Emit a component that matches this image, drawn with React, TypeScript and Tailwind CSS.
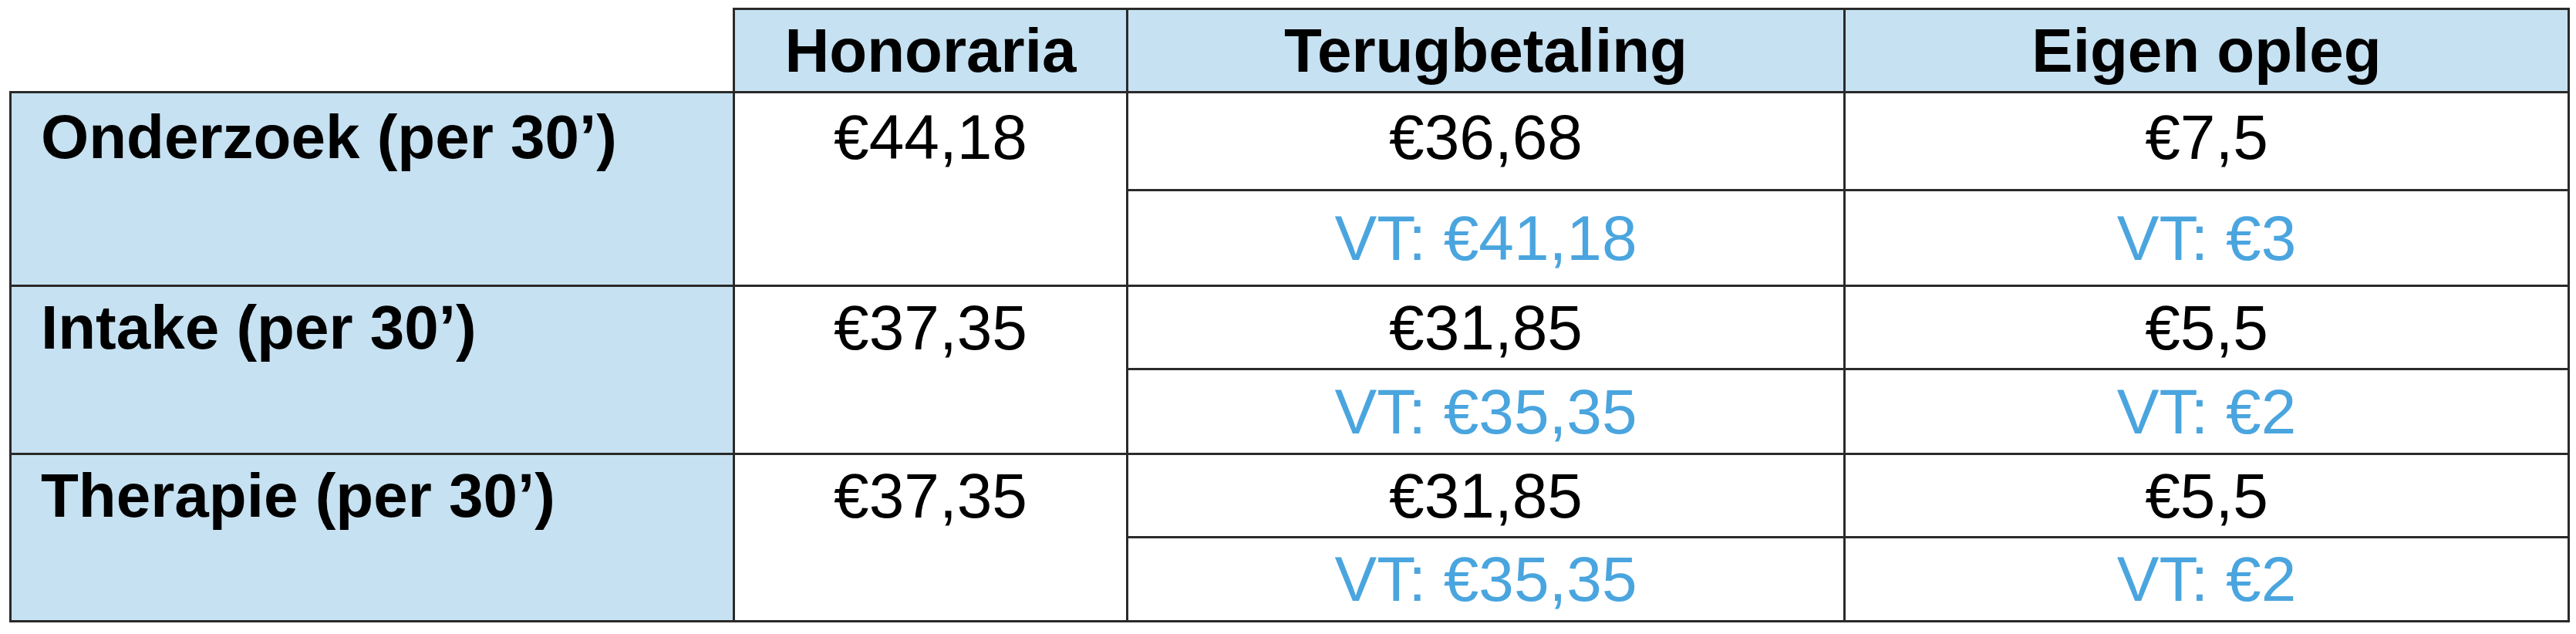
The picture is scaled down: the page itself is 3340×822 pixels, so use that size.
import React from "react";

type Row = {
  label: string;
  hon: string;
  terug: string;
  eigen: string;
  vtT: string;
  vtE: string;
  h1: string;
  h2: string;
  inner: string;
};

const rows: Row[] = [
  {
    label: "Onderzoek (per 30’)",
    hon: "€44,18",
    terug: "€36,68",
    eigen: "€7,5",
    vtT: "VT: €41,18",
    vtE: "VT: €3",
    h1: "h-[127px]",
    h2: "h-[124px]",
    inner: "h-[124px] pb-[10px]",
  },
  {
    label: "Intake (per 30’)",
    hon: "€37,35",
    terug: "€31,85",
    eigen: "€5,5",
    vtT: "VT: €35,35",
    vtE: "VT: €2",
    h1: "h-[108px]",
    h2: "h-[110px]",
    inner: "h-[105px]",
  },
  {
    label: "Therapie (per 30’)",
    hon: "€37,35",
    terug: "€31,85",
    eigen: "€5,5",
    vtT: "VT: €35,35",
    vtE: "VT: €2",
    h1: "h-[108px]",
    h2: "h-[109px]",
    inner: "h-[105px]",
  },
];

const cell = "border-[3px] border-[#2a2a2a] p-0 leading-none";

export default function App() {
  return (
    <div className="min-h-screen bg-white pt-[10px] pl-[12px] font-['Liberation_Sans',Arial,sans-serif] text-black">
      <table className="table-fixed border-collapse w-[3317px]">
        <colgroup>
          <col className="w-[938px]" />
          <col className="w-[510px]" />
          <col className="w-[930px]" />
          <col className="w-[939px]" />
        </colgroup>
        <thead>
          <tr className="h-[108px]">
            <th className="border-0 border-r-[3px] border-b-[3px] border-[#2a2a2a] bg-white p-0"></th>
            <th className={`${cell} bg-[#c6e1f1] text-[80px] font-bold text-center align-middle`}>
              Honoraria
            </th>
            <th className={`${cell} bg-[#c6e1f1] text-[80px] font-bold text-center align-middle`}>
              Terugbetaling
            </th>
            <th className={`${cell} bg-[#c6e1f1] text-[80px] font-bold text-center align-middle`}>
              Eigen opleg
            </th>
          </tr>
        </thead>
        <tbody>
          {rows.map((r) => (
            <React.Fragment key={r.label}>
              <tr className={r.h1}>
                <td rowSpan={2} className={`${cell} bg-[#c6e1f1] align-top`}>
                  <div className={`${r.inner} flex items-center pl-[38px] text-[80px] font-bold`}>
                    {r.label}
                  </div>
                </td>
                <td rowSpan={2} className={`${cell} bg-white align-top`}>
                  <div className={`${r.inner} flex items-center justify-center text-[82px]`}>
                    {r.hon}
                  </div>
                </td>
                <td className={`${cell} bg-white align-top`}>
                  <div className={`${r.inner} flex items-center justify-center text-[82px]`}>
                    {r.terug}
                  </div>
                </td>
                <td className={`${cell} bg-white align-top`}>
                  <div className={`${r.inner} flex items-center justify-center text-[82px]`}>
                    {r.eigen}
                  </div>
                </td>
              </tr>
              <tr className={r.h2}>
                <td className={`${cell} bg-white text-center align-middle text-[82px] text-[#4aa5df]`}>
                  {r.vtT}
                </td>
                <td className={`${cell} bg-white text-center align-middle text-[82px] text-[#4aa5df]`}>
                  {r.vtE}
                </td>
              </tr>
            </React.Fragment>
          ))}
        </tbody>
      </table>
    </div>
  );
}
